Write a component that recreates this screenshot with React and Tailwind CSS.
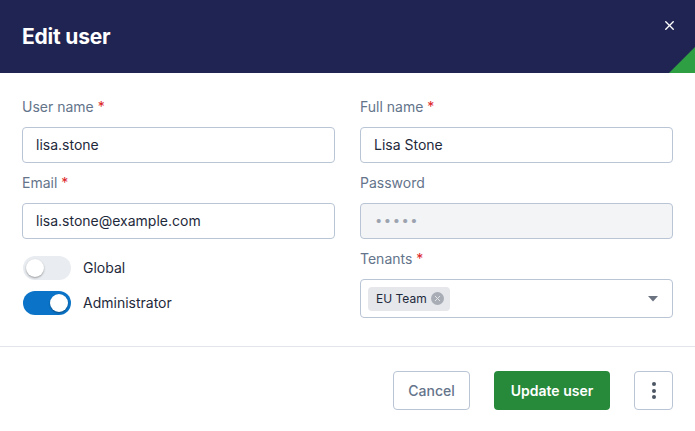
import { X } from 'lucide-react';

const Label = ({ children, required }) => (
  <label className="block text-sm leading-5 text-[#64748b] mb-2.5">
    {children}
    {required && <span className="text-[#dc2626]"> *</span>}
  </label>
);

const TextInput = ({ value }) => (
  <div className="h-9 flex items-center px-[13px] border border-[#b9c4d4] rounded bg-white text-sm text-[#1e293b]">
    {value}
  </div>
);

const Toggle = ({ on, label }) => (
  <div className="flex items-center gap-3 pl-px">
    <div
      className={`w-12 h-6 rounded-full flex items-center px-[3px] ${
        on ? 'bg-[#0b74c8] justify-end' : 'bg-[#e9ecf0] justify-start'
      }`}
    >
      <div className="w-[18px] h-[18px] rounded-full bg-white shadow-[0_1px_2px_rgba(0,0,0,0.35)]" />
    </div>
    <span className="text-sm text-[#1e293b]">{label}</span>
  </div>
);

export default function App() {
  return (
    <div className="w-[695px] h-[431px] bg-white overflow-hidden" style={{ fontFamily: 'Inter, "Noto Sans", sans-serif' }}>
      {/* Header */}
      <div className="relative h-[73px] bg-[#1f2452] flex items-center px-[22px] overflow-hidden">
        <h2 className="text-[21px] font-bold text-white tracking-[-0.2px]">Edit user</h2>
        <button className="absolute right-[18px] top-[18px] text-white">
          <X size={15} strokeWidth={2.2} />
        </button>
        <svg className="absolute right-0 bottom-0" width="26" height="26" viewBox="0 0 26 26">
          <polygon points="26,0 26,26 0,26" fill="#2ea043" />
        </svg>
      </div>

      {/* Form */}
      <div className="grid grid-cols-2 gap-x-[25px] px-[22px] pt-6 pb-7">
        <div className="flex flex-col">
          <Label required>User name</Label>
          <TextInput value="lisa.stone" />
          <div className="mt-2.5">
            <Label required>Email</Label>
            <TextInput value="lisa.stone@example.com" />
          </div>
          <div className="mt-[17px] flex flex-col gap-[11px]">
            <Toggle label="Global" />
            <Toggle on label="Administrator" />
          </div>
        </div>

        <div className="flex flex-col">
          <Label required>Full name</Label>
          <TextInput value="Lisa Stone" />
          <div className="mt-2.5">
            <Label>Password</Label>
            <div className="h-9 flex items-center px-[14px] border border-[#b9c4d4] rounded bg-[#f3f4f6] text-[13px] tracking-[1.5px] text-[#9ca3af]">
              •••••
            </div>
          </div>
          <div className="mt-2.5">
            <Label required>Tenants</Label>
            <div className="h-[39px] flex items-center justify-between pl-[7px] pr-[14px] border border-[#b9c4d4] rounded bg-white">
              <span className="flex items-center gap-[4px] h-6 pl-[8px] pr-[6px] rounded bg-[#e5e7eb] text-xs text-[#1e293b]">
                EU Team
                <span className="w-[13px] h-[13px] rounded-full bg-[#a8adb5] flex items-center justify-center">
                  <X size={9} strokeWidth={2.5} className="text-[#e5e7eb]" />
                </span>
              </span>
              <svg width="10" height="6" viewBox="0 0 10 6">
                <polygon points="0,0 10,0 5,5.5" fill="#6b7280" />
              </svg>
            </div>
          </div>
        </div>
      </div>

      {/* Footer */}
      <div className="border-t border-[#e2e6eb] flex justify-end items-center gap-[24px] px-[22px] pt-[24px]">
        <button className="h-[39px] w-[77px] border border-[#b9c4d4] rounded text-sm text-[#64748b] font-medium bg-white">
          Cancel
        </button>
        <button className="h-[39px] w-[116px] rounded bg-[#27893a] text-sm font-semibold text-white">
          Update user
        </button>
        <button className="h-[39px] w-[39px] border border-[#b9c4d4] rounded flex flex-col items-center justify-center gap-[2.5px]">
          <span className="w-1 h-1 rounded-full bg-[#4b5563]" />
          <span className="w-1 h-1 rounded-full bg-[#4b5563]" />
          <span className="w-1 h-1 rounded-full bg-[#4b5563]" />
        </button>
      </div>
    </div>
  );
}
